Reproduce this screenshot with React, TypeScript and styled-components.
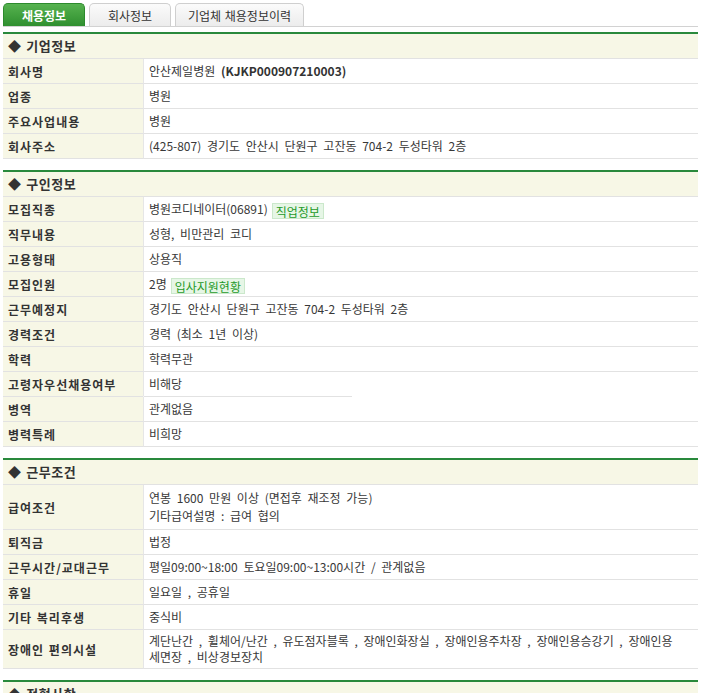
import React from "react";
import styled, { createGlobalStyle, css } from "styled-components";

const GlobalStyle = createGlobalStyle`
  html, body {
    margin: 0;
    padding: 0;
    background: #ffffff;
  }
  body {
    font-family: "Noto Sans CJK KR", "Noto Sans", "DejaVu Sans", sans-serif;
    font-size: 12px;
    color: #333333;
    word-spacing: 3px;
  }
`;

const Page = styled.div`
  width: 695px;
  margin-left: 3px;
  padding-top: 3px;
  padding-bottom: 20px;
`;

const TabBar = styled.div`
  display: flex;
  align-items: flex-end;
  gap: 4px;
  height: 23px;
  border-bottom: 1px solid #d2d2d2;
`;

const Tab = styled.div<{ $active?: boolean; $w: number }>`
  width: ${(p) => p.$w}px;
  height: 23px;
  box-sizing: border-box;
  display: flex;
  align-items: center;
  justify-content: center;
  border-radius: 5px 5px 0 0;
  font-size: 12px;
  word-spacing: 1px;
  ${(p) =>
    p.$active
      ? css`
          background: linear-gradient(#56b24f, #2f8f2f);
          border: 1px solid #2c8a2c;
          border-bottom: none;
          color: #ffffff;
          font-weight: bold;
        `
      : css`
          background: linear-gradient(#fbfbfb, #ececec);
          border: 1px solid #cfcfcf;
          border-bottom: none;
          color: #333333;
        `}
`;

const Section = styled.section`
  margin-top: 5px;
  border-top: 2px solid #29893c;
  & + & {
    margin-top: 11px;
  }
`;

const SectionTitle = styled.div`
  height: 24px;
  line-height: 24px;
  padding-left: 5px;
  background: #f7f7e6;
  border-bottom: 1px solid #e2e2e2;
  font-size: 13px;
  font-weight: bold;
  letter-spacing: 0.6px;
  word-spacing: 1px;
  color: #333333;
`;

const Row = styled.div`
  display: grid;
  grid-template-columns: 140px 1fr;
`;

const Label = styled.div`
  display: flex;
  align-items: center;
  padding-left: 5px;
  background: #f7f7e6;
  border-bottom: 1px solid #e2e2e2;
  font-weight: bold;
  letter-spacing: 1px;
  word-spacing: 1px;
  color: #333333;
  min-height: 24px;
  white-space: pre;
`;

const Value = styled.div<{ $short?: boolean; $lh?: number; $pad?: number }>`
  min-height: 24px;
  padding: ${(p) => p.$pad ?? 0}px 5px;
  line-height: ${(p) => p.$lh ?? 24}px;
  background: #ffffff;
  border-left: 1px solid #e6e6e6;
  border-bottom: 1px solid #e2e2e2;
  color: #383838;
  ${(p) =>
    p.$short &&
    css`
      border-bottom-color: transparent;
      background-image: linear-gradient(#e2e2e2, #e2e2e2);
      background-size: 209px 1px;
      background-position: left bottom;
      background-repeat: no-repeat;
      background-origin: border-box;
    `}
`;

const Strong = styled.b`
  font-weight: bold;
  color: #333333;
`;

const Badge = styled.span`
  display: inline-block;
  margin-left: 4px;
  padding: 0 3px;
  height: 16px;
  line-height: 15px;
  box-sizing: border-box;
  vertical-align: middle;
  background: #e6f6e6;
  border: 1px solid #cbe8cb;
  color: #1f9a2a;
  font-size: 12px;
  word-spacing: 0;
`;

type Item = {
  label: string;
  value: React.ReactNode;
  short?: boolean;
  lh?: number;
  pad?: number;
};

const company: Item[] = [
  {
    label: "회사명",
    value: (
      <>
        안산제일병원 <Strong>(KJKP000907210003)</Strong>
      </>
    ),
  },
  { label: "업종", value: "병원" },
  { label: "주요사업내용", value: "병원" },
  { label: "회사주소", value: "(425-807) 경기도 안산시 단원구 고잔동 704-2 두성타워 2층" },
];

const recruit: Item[] = [
  {
    label: "모집직종",
    value: (
      <>
        병원코디네이터(06891)<Badge>직업정보</Badge>
      </>
    ),
  },
  { label: "직무내용", value: "성형, 비만관리 코디" },
  { label: "고용형태", value: "상용직" },
  {
    label: "모집인원",
    value: (
      <>
        2명<Badge>입사지원현황</Badge>
      </>
    ),
  },
  { label: "근무예정지", value: "경기도 안산시 단원구 고잔동 704-2 두성타워 2층" },
  { label: "경력조건", value: "경력 (최소 1년 이상)" },
  { label: "학력", value: "학력무관" },
  { label: "고령자우선채용여부", value: "비해당", short: true },
  { label: "병역", value: "관계없음" },
  { label: "병력특례", value: "비희망" },
];

const work: Item[] = [
  {
    label: "급여조건",
    value: (
      <>
        연봉 1600 만원 이상 (면접후 재조정 가능)
        <br />
        기타급여설명 : 급여 협의
      </>
    ),
    lh: 18,
    pad: 4,
  },
  { label: "퇴직금", value: "법정" },
  { label: "근무시간/교대근무", value: "평일09:00~18:00 토요일09:00~13:00시간 / 관계없음" },
  { label: "휴일", value: "일요일 , 공휴일" },
  { label: "기타 복리후생", value: "중식비" },
  {
    label: "장애인 편의시설",
    value: (
      <>
        계단난간 , 휠체어/난간 , 유도점자블록 , 장애인화장실 , 장애인용주차장 , 장애인용승강기 , 장애인용
        <br />
        세면장 , 비상경보장치
      </>
    ),
    lh: 16,
    pad: 3,
  },
];

const InfoSection: React.FC<{ title: string; items: Item[] }> = ({ title, items }) => (
  <Section>
    <SectionTitle>◆ {title}</SectionTitle>
    {items.map((it) => (
      <Row key={it.label}>
        <Label>{it.label}</Label>
        <Value $short={it.short} $lh={it.lh} $pad={it.pad}>
          {it.value}
        </Value>
      </Row>
    ))}
  </Section>
);

export default function App() {
  return (
    <>
      <GlobalStyle />
      <Page>
        <TabBar>
          <Tab $active $w={82}>
            채용정보
          </Tab>
          <Tab $w={82}>회사정보</Tab>
          <Tab $w={129}>기업체 채용정보이력</Tab>
        </TabBar>
        <InfoSection title="기업정보" items={company} />
        <InfoSection title="구인정보" items={recruit} />
        <InfoSection title="근무조건" items={work} />
        <InfoSection title="전형사항" items={[{ label: "전형방법", value: "서류, 면접" }]} />
      </Page>
    </>
  );
}
